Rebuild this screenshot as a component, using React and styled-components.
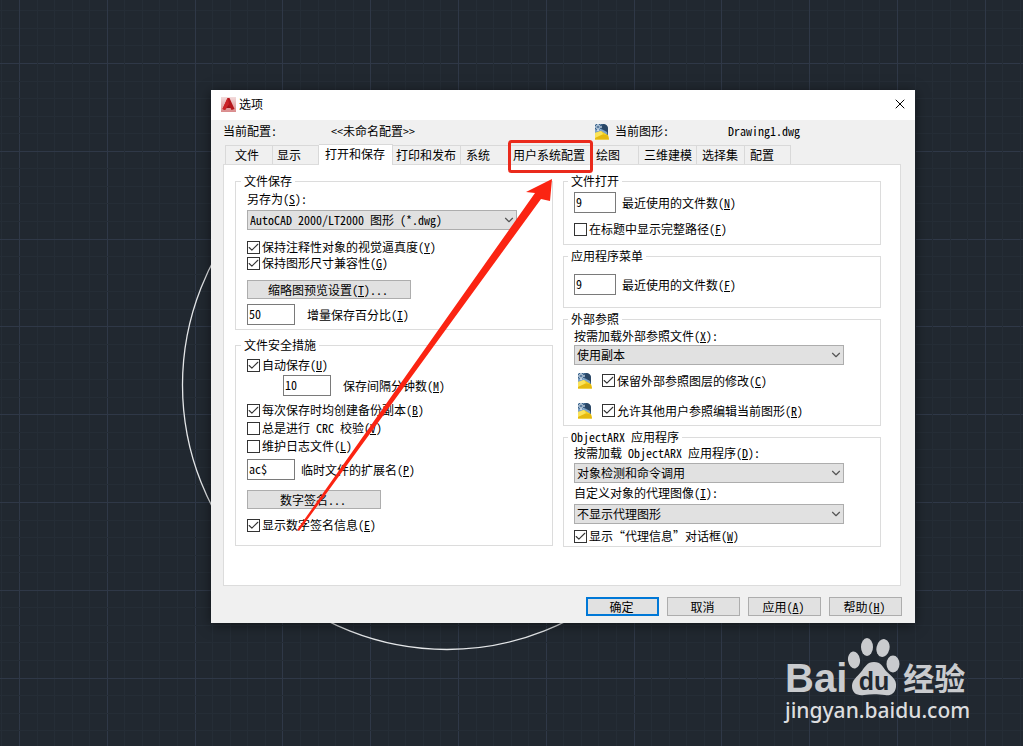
import React, {useState} from "react";
import styled, {createGlobalStyle} from "styled-components";
import {Check, ChevronDown, X} from "lucide-react";

const GlobalStyle = createGlobalStyle`
  * {
    box-sizing: border-box;
  }

  body {
    margin: 0;
    background-color: #212830;
  }

  body, button, input, select {
    font-family: "Noto Sans CJK SC", sans-serif;
    font-size: 12px;
    line-height: 16px;
    font-feature-settings: "hwid";
    color: #000000;
  }
`;

// Styled Components
const Desktop = styled.main`
  position: relative;
  min-height: 100vh;
  padding: 90px 108px 123px 211px;
  overflow: hidden;
  background-color: #212830;
`;

const Canvas = styled.svg`
  position: absolute;
  inset: 0;
  width: 100%;
  height: 100%;
`;

const Dialog = styled.section`
  position: relative;
  background-color: #f0f0f0;
  box-shadow: 0 2px 12px rgba(0, 0, 0, 0.5);
`;

const TitleBar = styled.header`
  display: flex;
  align-items: center;
  gap: 3px;
  height: 30px;
  padding: 0 7px 2px 10px;
  background-color: #ffffff;

  h1 {
    flex: 1;
    margin: 0;
    font-size: 12px;
    font-weight: 400;
  }
`;

const CloseButton = styled.button`
  display: flex;
  padding: 0;
  border: none;
  background: none;
`;

const ProfileBar = styled.div`
  display: grid;
  grid-template-columns: 108px 263px 21px 113px 1fr;
  align-items: center;
  height: 24px;
  padding: 0 0 2px 12px;
`;

const TabList = styled.div`
  display: flex;
  align-items: flex-end;
  padding: 0 14px;
`;

const Tab = styled.button`
  width: ${({$width}) => $width}px;
  height: ${({$active}) => ($active ? 21 : 19)}px;
  margin-bottom: ${({$active}) => ($active ? -1 : 0)}px;
  padding: 0 0 ${({$active}) => ($active ? 3 : 0)}px ${({$indent}) => $indent || 4}px;
  border: 1px solid #d9d9d9;
  border-bottom: none;
  border-left-width: ${({$first}) => ($first ? 1 : 0)}px;
  background-color: ${({$active}) => ($active ? "#ffffff" : "#f0f0f0")};
  text-align: left;
  white-space: nowrap;
  z-index: ${({$active}) => ($active ? 1 : 0)};
`;

const Pane = styled.div`
  display: flex;
  gap: 10px;
  margin: 0 14px 0 12px;
  padding: 8px 19px 38px 11px;
  border: 1px solid #dcdcdc;
  background-color: #ffffff;
`;

const Column = styled.div`
  display: flex;
  flex: 1;
  flex-direction: column;
  gap: ${({$gap}) => $gap}px;
  min-width: 0;
`;

const Group = styled.fieldset`
  min-width: 0;
  margin: 0;
  padding: 0 10px ${({$bottom}) => $bottom}px ${({$left}) => $left}px;
  border: 1px solid #dcdcdc;

  legend {
    height: 16px;
    margin-left: -6px;
    padding: 0 3px;
  }
`;

const Row = styled.div`
  display: flex;
  align-items: center;
  gap: ${({$gap}) => $gap || 0}px;
  min-height: 16px;
  margin-top: ${({$top}) => $top || 0}px;
  padding-left: ${({$indent}) => $indent || 0}px;
  white-space: nowrap;
`;

const TextBox = styled.input`
  width: ${({$width}) => $width}px;
  height: 21px;
  padding: 0 1px 3px;
  border: 1px solid #7a7a7a;
  border-radius: 0;
  background-color: #ffffff;
`;

const SelectWrap = styled.div`
  position: relative;
  width: 270px;

  select {
    display: block;
    width: 100%;
    height: 20px;
    padding: 0 20px 0 2px;
    border: 1px solid #adadad;
    border-radius: 0;
    background-color: #e1e1e1;
    appearance: none;
  }

  svg {
    position: absolute;
    top: 3px;
    right: 1px;
    color: #555555;
    pointer-events: none;
  }
`;

const CheckLabel = styled.label`
  display: flex;
  align-items: center;
  gap: 2px;
`;

const CheckMark = styled.span`
  display: grid;
  place-items: center;

  input, svg {
    grid-area: 1 / 1;
  }

  input {
    width: 13px;
    height: 13px;
    margin: 0;
    border: 1px solid #333333;
    background-color: #ffffff;
    appearance: none;
  }

  svg {
    display: none;
    z-index: 1;
    pointer-events: none;
  }

  input:checked + svg {
    display: block;
  }
`;

const PushButton = styled.button`
  width: ${({$width}) => $width || 73}px;
  height: 19px;
  padding: 0 2px 0 0;
  border: ${({$primary}) => ($primary ? "2px solid #0078d7" : "1px solid #adadad")};
  background-color: #e1e1e1;
  line-height: 14px;
`;

const Footer = styled.footer`
  display: flex;
  justify-content: flex-end;
  gap: 8px;
  padding: 11px 13px 7px;
`;

const Callout = styled.svg`
  position: absolute;
  top: 130px;
  left: 280px;
  pointer-events: none;
`;

const Watermark = styled.div`
  position: absolute;
  right: 54px;
  bottom: 22px;
  width: 184px;
  color: #c9cbce;
  font-feature-settings: normal;
  white-space: nowrap;
`;

const Brand = styled.div`
  display: flex;
  align-items: flex-end;
  height: 58px;

  .latin {
    font: 700 40px/36px "Liberation Sans", sans-serif;
  }

  .chinese {
    margin-left: 2px;
    font-size: 31px;
    font-weight: 700;
    line-height: 38px;
  }
`;

const Site = styled.div`
  font: 500 21px/28px "Noto Sans", sans-serif;
  color: #dcdddf;
`;

const TABS = [
    {name: "文件", width: 48, indent: 9, first: true},
    {name: "显示", width: 46},
    {name: "打开和保存", width: 74, indent: 6, active: true},
    {name: "打印和发布", width: 68, indent: 3},
    {name: "系统", width: 48, indent: 5},
    {name: "用户系统配置", width: 83, indent: 4},
    {name: "绘图", width: 47, indent: 4},
    {name: "三维建模", width: 58, indent: 5},
    {name: "选择集", width: 48, indent: 5},
    {name: "配置", width: 46, indent: 5},
];

// Turns "保存(S):" into text with the access key underlined
function Caption({text}) {
    const match = text.match(/^(.*\()([A-Z])(\).*)$/);
    if (!match) return <span>{text}</span>;
    return <span>{match[1]}<u>{match[2]}</u>{match[3]}</span>;
}

function CheckBox({text, checked = false}) {
    const [on, setOn] = useState(checked);
    return (
        <CheckLabel>
            <CheckMark>
                <input type="checkbox" checked={on} onChange={() => setOn(!on)}/>
                <Check size={13} strokeWidth={2} color="#333333"/>
            </CheckMark>
            <Caption text={text}/>
        </CheckLabel>
    );
}

function NumberRow({id, value, text, width = 48, gap = 12, top, indent}) {
    return (
        <Row $top={top} $gap={gap} $indent={indent}>
            <TextBox id={id} defaultValue={value} $width={width}/>
            <label htmlFor={id}><Caption text={text}/></label>
        </Row>
    );
}

function DropDown({id, value}) {
    return (
        <SelectWrap>
            <select id={id} defaultValue={value}>
                <option>{value}</option>
            </select>
            <ChevronDown size={14} strokeWidth={2}/>
        </SelectWrap>
    );
}

function AppLogo() {
    return (
        <svg width="15" height="15" viewBox="0 0 15 15" aria-hidden="true">
            <defs>
                <linearGradient id="logoBack" x1="0" y1="0" x2="0" y2="1">
                    <stop offset="0" stopColor="#f3dcdc"/>
                    <stop offset="1" stopColor="#d98a8b"/>
                </linearGradient>
            </defs>
            <rect width="15" height="15" fill="url(#logoBack)"/>
            <path d="M6.500 1h2L13.500 12l-3 1L9.500 11h-4L4 13l-2.500-1z" fill="#b5161c"/>
            <path d="M6.500 1L8 6l-1 5H5.500L4 13l-2.500-1z" fill="#cb2227"/>
            <path d="M5.500 11L7.500 8l2 3z" fill="#a01318"/>
        </svg>
    );
}

function DrawingIcon() {
    return (
        <svg width="16" height="17" viewBox="0 0 16 17" aria-hidden="true">
            <path d="M2 1h8c3 1 4 3 4 5v6H1V2z" fill="#3c6288"/>
            <path d="M9 1c4 0 5 3 5 5v4L7 5z" fill="#2a4766"/>
            <path d="M1 7l6-1 6 3v2H1z" fill="#7fa3c6"/>
            <path d="M1 10l6-2 5 3 2 1 1 4.500H1z" fill="#f4d21f"/>
            <path d="M1 14.500l8-3 5 1 1 4H1z" fill="#e5b90f"/>
            <path d="M1 10l6-2 2 3-8 4z" fill="#fbe35a"/>
            <path d="M4 0v8M0 4h8" stroke="#f4f9ff" strokeWidth="1.200"/>
            <path d="M1.500 1.500l5 5M6.500 1.500l-5 5" stroke="#b6d0e8" strokeWidth="0.800"/>
            <circle cx="4" cy="4" r="1" fill="#3c6288"/>
        </svg>
    );
}

function DrawingGrid() {
    const step = 17.56;
    const lines = Array.from({length: 160}, (_, i) => i - 3);
    return (
        <Canvas aria-hidden="true">
            {lines.map((i) => (
                <g key={i} stroke={i % 5 === 0 ? "#2f3847" : "#252d36"}>
                    <line x1={Math.round(19 + i * step) + 0.5} x2={Math.round(19 + i * step) + 0.5} y1="0" y2="100%"/>
                    <line y1={Math.round(63 + i * step) + 0.5} y2={Math.round(63 + i * step) + 0.5} x1="0" x2="100%"/>
                </g>
            ))}
            <circle cx="447" cy="385" r="264.500" fill="none" stroke="#e4e6e8" strokeWidth="1.300"/>
        </Canvas>
    );
}

function Paw() {
    return (
        <svg width="54" height="58" viewBox="0 0 54 58" aria-hidden="true">
            <g fill="#c9cbce">
                <ellipse cx="7" cy="22" rx="6" ry="8.500" transform="rotate(-8 7 22)"/>
                <ellipse cx="20" cy="9" rx="6" ry="9"/>
                <ellipse cx="36" cy="10" rx="6.500" ry="9" transform="rotate(12 36 10)"/>
                <ellipse cx="46" cy="26" rx="6.500" ry="8.500"/>
                <path d="M27 24c7 0 9 5 12 9 5 5 11 8 10 16-1 7-6 9-11 8-8-1-14-1-21 0-7 1-12-2-12-9 0-6 5-9 9-14 4-5 6-10 13-10z"/>
            </g>
            <text x="27" y="52" textAnchor="middle" fill="#212830" fontFamily="Liberation Sans" fontSize="25" fontWeight="700">du</text>
        </svg>
    );
}

// Component
export default function App() {
    const [activeTab, setActiveTab] = useState("打开和保存");

    return (
        <Desktop>
            <GlobalStyle/>
            <DrawingGrid/>
            <Dialog role="dialog" aria-labelledby="title">
                <TitleBar>
                    <AppLogo/>
                    <h1 id="title">选项</h1>
                    <CloseButton aria-label="关闭"><X size={16} strokeWidth={1.5}/></CloseButton>
                </TitleBar>
                <ProfileBar>
                    <span>当前配置:</span>
                    <span>&lt;&lt;未命名配置&gt;&gt;</span>
                    <DrawingIcon/>
                    <span>当前图形:</span>
                    <span>Drawing1.dwg</span>
                </ProfileBar>
                <TabList role="tablist">
                    {TABS.map((tab) => (
                        <Tab
                            key={tab.name}
                            role="tab"
                            aria-selected={tab.name === activeTab}
                            onClick={() => setActiveTab(tab.name)}
                            $active={tab.name === activeTab}
                            $width={tab.width}
                            $indent={tab.indent}
                            $first={tab.first}
                        >
                            {tab.name}
                        </Tab>
                    ))}
                </TabList>
                <Pane role="tabpanel">
                    <Column $gap={7}>
                        <Group $left={11} $bottom={4}>
                            <legend>文件保存</legend>
                            <Row $top={2}><label htmlFor="saveAs"><Caption text="另存为(S):"/></label></Row>
                            <Row $top={3}><DropDown id="saveAs" value="AutoCAD 2000/LT2000 图形 (*.dwg)"/></Row>
                            <Row $top={9}><CheckBox checked text="保持注释性对象的视觉逼真度(Y)"/></Row>
                            <Row><CheckBox checked text="保持图形尺寸兼容性(G)"/></Row>
                            <Row $top={9}><PushButton $width={164}><Caption text="缩略图预览设置(T)..."/></PushButton></Row>
                            <NumberRow id="percent" value="50" text="增量保存百分比(I)" top={5}/>
                        </Group>
                        <Group $left={11} $bottom={12}>
                            <legend>文件安全措施</legend>
                            <Row $top={4}><CheckBox checked text="自动保存(U)"/></Row>
                            <NumberRow id="minutes" value="10" text="保存间隔分钟数(M)" top={2} indent={36}/>
                            <Row $top={6}><CheckBox checked text="每次保存时均创建备份副本(B)"/></Row>
                            <Row $top={2}><CheckBox text="总是进行 CRC 校验(V)"/></Row>
                            <Row $top={2}><CheckBox text="维护日志文件(L)"/></Row>
                            <NumberRow id="extension" value="ac$" text="临时文件的扩展名(P)" top={5} gap={6}/>
                            <Row $top={10}><PushButton $width={134}>数字签名...</PushButton></Row>
                            <Row $top={8}><CheckBox checked text="显示数字签名信息(E)"/></Row>
                        </Group>
                    </Column>
                    <Column $gap={3}>
                        <Group $left={10} $bottom={7}>
                            <legend>文件打开</legend>
                            <NumberRow id="recentFiles" value="9" text="最近使用的文件数(N)" width={42} gap={6} top={3}/>
                            <Row $top={8}><CheckBox text="在标题中显示完整路径(F)"/></Row>
                        </Group>
                        <Group $left={10} $bottom={12}>
                            <legend>应用程序菜单</legend>
                            <NumberRow id="menuFiles" value="9" text="最近使用的文件数(F)" width={42} gap={6} top={10}/>
                        </Group>
                        <Group $left={10} $bottom={6}>
                            <legend>外部参照</legend>
                            <Row $top={1}><label htmlFor="xref"><Caption text="按需加载外部参照文件(X):"/></label></Row>
                            <Row $top={1}><DropDown id="xref" value="使用副本"/></Row>
                            <Row $top={7} $gap={9} $indent={3}><DrawingIcon/><CheckBox checked text="保留外部参照图层的修改(C)"/></Row>
                            <Row $top={13} $gap={9} $indent={3}><DrawingIcon/><CheckBox checked text="允许其他用户参照编辑当前图形(R)"/></Row>
                        </Group>
                        <Group $left={10} $bottom={2}>
                            <legend>ObjectARX 应用程序</legend>
                            <Row><label htmlFor="arx"><Caption text="按需加载 ObjectARX 应用程序(D):"/></label></Row>
                            <Row $top={2}><DropDown id="arx" value="对象检测和命令调用"/></Row>
                            <Row $top={2}><label htmlFor="proxy"><Caption text="自定义对象的代理图像(I):"/></label></Row>
                            <Row $top={3}><DropDown id="proxy" value="不显示代理图形"/></Row>
                            <Row $top={4}><CheckBox checked text="显示“代理信息”对话框(W)"/></Row>
                        </Group>
                    </Column>
                </Pane>
                <Footer>
                    <PushButton $primary>确定</PushButton>
                    <PushButton>取消</PushButton>
                    <PushButton><Caption text="应用(A)"/></PushButton>
                    <PushButton><Caption text="帮助(H)"/></PushButton>
                </Footer>
            </Dialog>
            <Callout width="330" height="410" viewBox="280 130 330 410" aria-hidden="true">
                <rect x="509.500" y="141.500" width="82" height="30" rx="2" fill="none" stroke="#ea2a1c" strokeWidth="3"/>
                <path d="M297 530L535 193l-9-1 26-13-2 22-9-2L299 531z" fill="#fb2412"/>
            </Callout>
            <Watermark>
                <Brand>
                    <span className="latin">Bai</span>
                    <Paw/>
                    <span className="chinese">经验</span>
                </Brand>
                <Site>jingyan.baidu.com</Site>
            </Watermark>
        </Desktop>
    );
}
